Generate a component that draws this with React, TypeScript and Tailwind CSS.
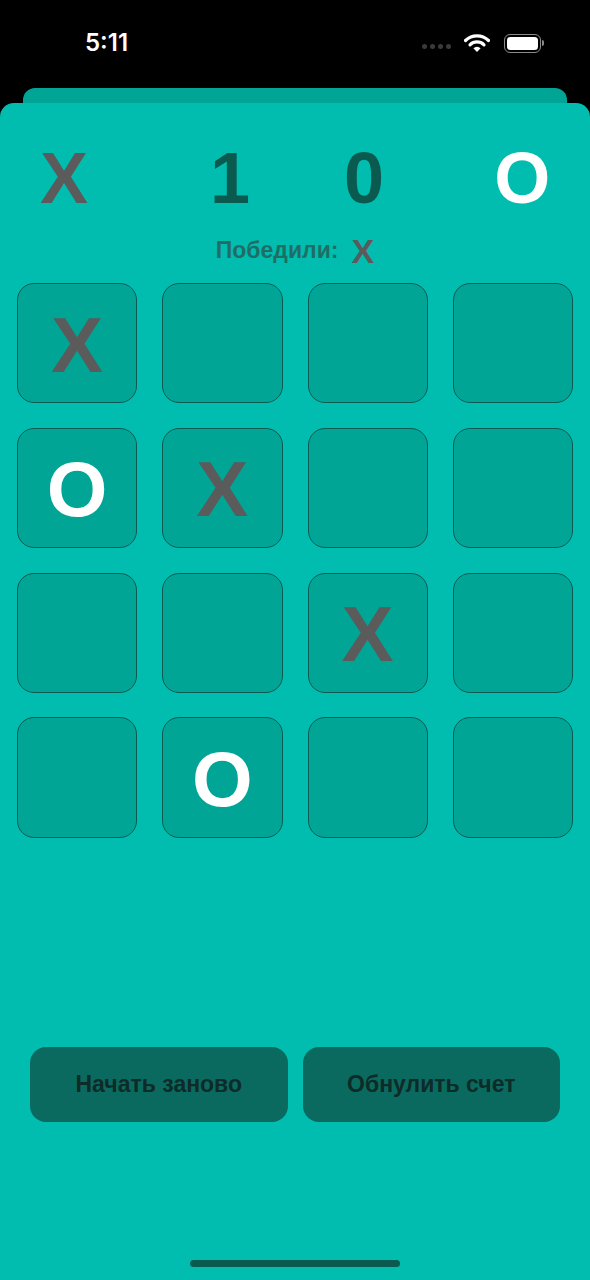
const board: string[][] = [
  ["X", "", "", ""],
  ["O", "X", "", ""],
  ["", "", "X", ""],
  ["", "O", "", ""],
];

function Mark({ value, className }: { value: string; className: string }) {
  if (!value) return null;
  return (
    <span className={`${className} font-bold leading-none ${value === "X" ? "text-[#5b5b5b]" : "text-white"}`}>
      {value}
    </span>
  );
}

function StatusBar() {
  return (
    <div className="h-[88px] shrink-0 bg-black flex items-center px-[85px] pr-[46px] pb-[2px]">
      <span className="text-white text-[24px] font-semibold font-['Inter',sans-serif]">5:11</span>
      <div className="ml-auto flex items-center">
        <div className="flex gap-[3px] mr-[13px] mt-[6px]">
          {[0, 1, 2, 3].map((i) => (
            <span key={i} className="block h-[5px] w-[5px] rounded-full bg-[#3a3a3a]" />
          ))}
        </div>
        <svg width="26" height="20" viewBox="0 0 26 20" className="mr-[14px]">
          <path d="M1.5 7.5a16.5 16.5 0 0 1 23 0" stroke="white" strokeWidth="3.2" fill="none" strokeLinecap="round" />
          <path d="M6 11.8a10 10 0 0 1 14 0" stroke="white" strokeWidth="3.2" fill="none" strokeLinecap="round" />
          <path d="M13 19l-3.6-3.8a5 5 0 0 1 7.2 0z" fill="white" />
        </svg>
        <div className="flex items-center">
          <div className="h-[19px] w-[37px] rounded-[6px] border-[1.5px] border-[#8a8a8a] p-[2px]">
            <div className="h-full w-full rounded-[3.5px] bg-white" />
          </div>
          <span className="ml-[1px] block h-[6px] w-[2px] rounded-r-full bg-[#8a8a8a]" />
        </div>
      </div>
    </div>
  );
}

export default function App() {
  return (
    <div className="w-[590px] h-[1280px] bg-black flex flex-col overflow-hidden font-['Liberation_Sans',Arial,sans-serif]">
      <StatusBar />
      {/* stacked sheet behind the main one */}
      <div className="mx-[23px] h-[15px] shrink-0 rounded-t-[12px] bg-[#00a596]" />
      <div className="flex-1 flex flex-col rounded-t-[14px] bg-[#00bdb0]">
        {/* score */}
        <div className="mt-[39px] h-[72px] flex items-center pl-[40px] text-[72px] font-bold leading-none">
          <span className="text-[#5b5b5b]">X</span>
          <span className="text-[#0b5a50] ml-[122px]">1</span>
          <span className="text-[#0b5a50] ml-[94px]">0</span>
          <span className="text-white ml-[110px]">O</span>
        </div>
        <div className="mt-[18px] h-[36px] flex items-center justify-center gap-[13px]">
          <span className="text-[23px] font-bold text-[#1e6e66]">Победили:</span>
          <span className="text-[34px] font-bold leading-none text-[#5b5b5b] mt-[2px]">X</span>
        </div>

        {/* board */}
        <div className="mt-[15px] grid grid-cols-4 gap-x-[25px] gap-y-[24.5px] px-[17px]">
          {board.flat().map((v, i) => (
            <div
              key={i}
              className="aspect-square flex items-center justify-center rounded-[17px] border border-[#0c5b53] bg-[#00a596]"
            >
              <Mark value={v} className="text-[78px] mt-[3px]" />
            </div>
          ))}
        </div>

        <div className="flex-1" />

        {/* actions */}
        <div className="flex gap-[15px] pl-[30px] pr-[30px]">
          <button className="h-[75px] flex-1 rounded-[16px] bg-[#0b6a60] text-[23px] font-bold text-[#0d2b27]">
            Начать заново
          </button>
          <button className="h-[75px] flex-1 rounded-[16px] bg-[#0b6a60] text-[23px] font-bold text-[#0d2b27]">
            Обнулить счет
          </button>
        </div>

        <div className="mt-[138px] mb-[13px] mx-auto h-[7px] w-[210px] rounded-full bg-[#0b5a50]" />
      </div>
    </div>
  );
}
